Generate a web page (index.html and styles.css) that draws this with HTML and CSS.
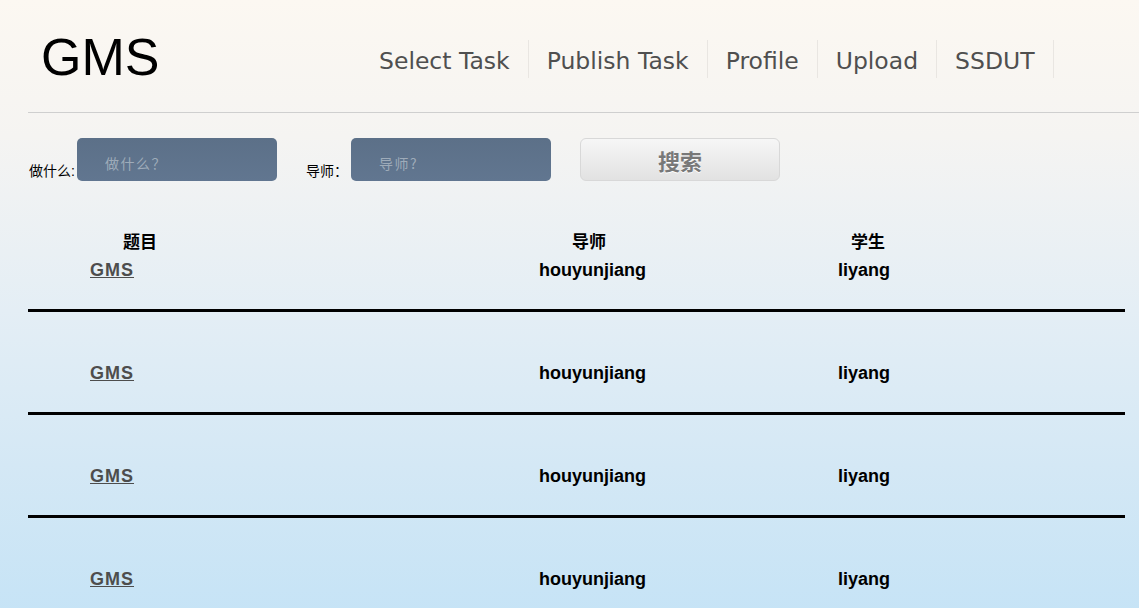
FILE: index.html
```html
<!DOCTYPE html>
<html lang="zh">
<head>
<meta charset="utf-8">
<title>GMS</title>
<link rel="stylesheet" href="styles.css">
</head>
<body>
<div class="page">
  <header class="header">
    <div class="logo">GMS</div>
    <nav class="nav">
      <a class="nav-item" href="#">Select Task</a>
      <a class="nav-item" href="#">Publish Task</a>
      <a class="nav-item" href="#">Profile</a>
      <a class="nav-item" href="#">Upload</a>
      <a class="nav-item" href="#">SSDUT</a>
    </nav>
  </header>

  <form class="search">
    <label class="search-label">做什么:</label>
    <input class="search-input" type="text" placeholder="做什么？">
    <label class="search-label label-gap">导师：</label>
    <input class="search-input" type="text" placeholder="导师?">
    <button class="search-btn" type="button">搜索</button>
  </form>

  <div class="list">
    <div class="list-head">
      <span class="h1">题目</span>
      <span class="h2">导师</span>
      <span class="h3">学生</span>
    </div>
    <div class="list-row first">
      <a class="task" href="#">GMS</a>
      <span class="val">houyunjiang</span>
      <span class="val">liyang</span>
    </div>
    <div class="list-row">
      <a class="task" href="#">GMS</a>
      <span class="val">houyunjiang</span>
      <span class="val">liyang</span>
    </div>
    <div class="list-row">
      <a class="task" href="#">GMS</a>
      <span class="val">houyunjiang</span>
      <span class="val">liyang</span>
    </div>
    <div class="list-row">
      <a class="task" href="#">GMS</a>
      <span class="val">houyunjiang</span>
      <span class="val">liyang</span>
    </div>
  </div>
</div>
</body>
</html>
```

FILE: styles.css
```css
html, body {
  margin: 0;
  padding: 0;
}

body {
  min-height: 100vh;
  background: linear-gradient(to bottom, #fcf8f2 0%, #f5f4f2 22%, #e4eef5 50%, #d4e8f5 75%, #c5e3f6 100%);
  font-family: "Liberation Sans", "Noto Sans CJK SC", sans-serif;
  color: #000;
  overflow: hidden;
}

.page {
  margin-left: 28px;
}

/* header */
.header {
  display: flex;
  align-items: flex-start;
  height: 112px;
  border-bottom: 1px solid #cfcfcf;
}

.logo {
  font-family: "Liberation Sans", sans-serif;
  font-size: 52px;
  line-height: 52px;
  margin-top: 31px;
  margin-left: 13px;
  width: 120px;
  color: #000;
}

.nav {
  display: flex;
  margin-top: 40px;
  margin-left: 200px;
}

.nav-item {
  display: block;
  height: 38px;
  line-height: 42px;
  padding: 0 18px;
  border-right: 1px solid #e9e6e2;
  font-family: "DejaVu Sans", sans-serif;
  font-size: 23.5px;
  color: #4f4f4f;
  text-decoration: none;
}

/* search */
.search {
  display: flex;
  align-items: flex-end;
  margin-top: 25px;
  margin-left: 1px;
  height: 43px;
}

.search-label {
  font-size: 14px;
  line-height: 16px;
  padding-bottom: 2px;
  margin-right: 2px;
  color: #000;
}

.label-gap {
  margin-left: 29px;
  margin-right: 3px;
}

.search-input {
  box-sizing: border-box;
  width: 200px;
  height: 43px;
  padding: 7px 0 0 28px;
  border: none;
  border-radius: 5px;
  background: linear-gradient(to bottom, #5c7088 0%, #617690 100%);
  font-family: "Noto Sans CJK SC", sans-serif;
  font-size: 14px;
  letter-spacing: 1.5px;
  color: #fff;
  outline: none;
}

.search-input::placeholder {
  color: #9eabb9;
}

.search-btn {
  box-sizing: border-box;
  width: 200px;
  height: 43px;
  margin-left: 29px;
  border: 1px solid #d8d8d8;
  border-radius: 6px;
  background: linear-gradient(to bottom, #f6f6f6 0%, #e2e2e2 100%);
  font-family: "Noto Sans CJK SC", sans-serif;
  font-size: 22px;
  font-weight: bold;
  color: #787878;
  text-shadow: 0 1px 0 #fff;
  padding: 0;
}

/* list */
.list {
  margin-top: 50px;
  margin-right: 14px;
}

.list-head,
.list-row {
  display: grid;
  grid-template-columns: 449px 299px 1fr;
  padding-left: 62px;
  font-size: 18px;
  line-height: 20px;
  font-weight: bold;
}

.h1 { margin-left: 33px; }
.h2 { margin-left: 33px; }
.h3 { margin-left: 13px; }

.list-head span {
  font-family: "Noto Sans CJK SC", sans-serif;
  font-size: 17px;
}

.list-row {
  padding-top: 51px;
  padding-bottom: 29px;
  border-bottom: 3px solid #000;
}

.list-row.first {
  padding-top: 9px;
}

.task {
  justify-self: start;
  color: #4d4d4d;
  text-decoration: underline;
  letter-spacing: 1px;
}

.val {
  color: #000;
}
```
